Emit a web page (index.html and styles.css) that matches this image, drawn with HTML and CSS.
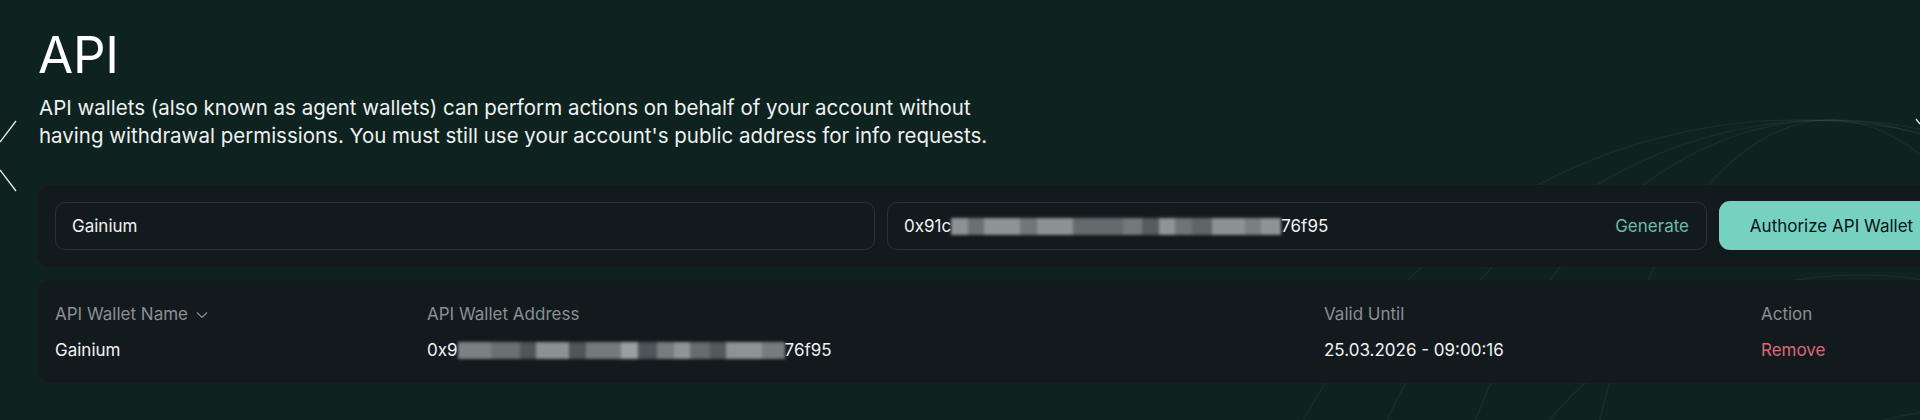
FILE: index.html
```html
<!DOCTYPE html>
<html lang="en">
<head>
<meta charset="utf-8">
<title>API</title>
<link rel="stylesheet" href="styles.css">
</head>
<body>
<div class="page">
  <svg class="decor" width="1920" height="420" viewBox="0 0 1920 420" xmlns="http://www.w3.org/2000/svg">
    <g fill="none" stroke="rgba(255,255,255,0.045)" stroke-width="1.5">
      <circle cx="1800" cy="680" r="560"/>
      <circle cx="1860" cy="680" r="405"/>
      <circle cx="1960" cy="700" r="290"/>
      <ellipse cx="1830" cy="680" rx="500" ry="560"/>
      <ellipse cx="1830" cy="680" rx="400" ry="560"/>
      <ellipse cx="1830" cy="680" rx="260" ry="560"/>
    </g>
    <g stroke="#e9eeed" stroke-width="1.3" fill="none">
      <line x1="16" y1="121" x2="0" y2="142"/>
      <line x1="0" y1="170" x2="16" y2="191"/>
      <line x1="1916" y1="119" x2="1920" y2="124"/>
      <line x1="1920" y1="187" x2="1916" y2="192"/>
    </g>
  </svg>

  <main class="content">
    <h1 class="title">API</h1>
    <p class="intro">API wallets (also known as agent wallets) can perform actions on behalf of your account without having withdrawal permissions. You must still use your account's public address for info requests.</p>

    <section class="card form-card">
      <div class="field">
        <span class="field-text">Gainium</span>
      </div>
      <div class="field field-address">
        <span class="field-text">0x91c<span class="blur blur-input"></span>76f95</span>
        <span class="generate">Generate</span>
      </div>
      <button class="authorize" type="button">Authorize API Wallet</button>
    </section>

    <section class="card table-card">
      <div class="table">
        <div class="th">API Wallet Name
          <svg class="chev" width="12" height="8" viewBox="0 0 12 8"><path d="M1 1.5 L6 6.5 L11 1.5" fill="none" stroke="#8a8f93" stroke-width="1.2"/></svg>
        </div>
        <div class="th">API Wallet Address</div>
        <div class="th">Valid Until</div>
        <div class="th">Action</div>

        <div class="td">Gainium</div>
        <div class="td">0x9<span class="blur blur-table"></span>76f95</div>
        <div class="td">25.03.2026 - 09:00:16</div>
        <div class="td remove">Remove</div>
      </div>
    </section>
  </main>
</div>
</body>
</html>
```

FILE: styles.css
```css
* {
  box-sizing: border-box;
}

html,
body {
  margin: 0;
  padding: 0;
  background: #0e231f;
  overflow: hidden;
}

body {
  font-family: Inter, "Noto Sans", "Liberation Sans", sans-serif;
  color: #f1f3f3;
  width: 1920px;
  height: 420px;
}

.page {
  position: relative;
  width: 1920px;
  height: 420px;
  overflow: hidden;
}

.decor {
  position: absolute;
  left: 0;
  top: 0;
  z-index: 0;
}

.content {
  position: relative;
  z-index: 1;
  padding: 25px 0 0 38px;
  width: 1956px;
}

.title {
  margin: 0;
  font-size: 51px;
  line-height: 60px;
  font-weight: 400;
  color: #ffffff;
  letter-spacing: -0.3px;
}

.intro {
  margin: 9px 0 0 1px;
  max-width: 980px;
  font-size: 20.5px;
  line-height: 28px;
  color: #eef1f1;
}

.card {
  background: #131a1d;
  border-radius: 12px;
  width: 1918px;
}

.form-card {
  margin-top: 35px;
  padding: 17px;
  display: grid;
  grid-template-columns: 820px 820px 220px;
  column-gap: 12px;
}

.field {
  height: 48px;
  border: 1px solid #2a3134;
  border-radius: 10px;
  display: flex;
  align-items: center;
  justify-content: space-between;
  padding: 0 17px 0 16px;
  font-size: 17px;
}

.field-text {
  display: inline-flex;
  align-items: center;
  color: #f1f3f3;
}

.generate {
  color: #66bdad;
}

.blur {
  display: inline-block;
  height: 17px;
  filter: blur(1.6px);
  margin-top: 1px;
}

.blur-input {
  width: 330px;
  background: linear-gradient(to right,
    #8c9193 0%, #8c9193 5%,
    #6b7073 5%, #6b7073 10%,
    #8e9395 10%, #8e9395 21%,
    #70767a 21%, #70767a 26%,
    #8d9294 26%, #8d9294 37%,
    #646a6d 37%, #646a6d 52%,
    #74797c 52%, #74797c 58%,
    #555b5e 58%, #555b5e 63%,
    #8f9496 63%, #8f9496 68%,
    #6f7477 68%, #6f7477 73%,
    #5f6568 73%, #5f6568 79%,
    #8d9294 79%, #8d9294 89%,
    #7a7f82 89%, #7a7f82 94%,
    #8e9395 94%, #8e9395 100%);
}

.blur-table {
  width: 327px;
  background: linear-gradient(to right,
    #7c8184 0%, #7c8184 10%,
    #6a6f72 10%, #6a6f72 19%,
    #4f5558 19%, #4f5558 24%,
    #8c9193 24%, #8c9193 34%,
    #4f5558 34%, #4f5558 39%,
    #74797c 39%, #74797c 50%,
    #9a9fa1 50%, #9a9fa1 55%,
    #4e5457 55%, #4e5457 61%,
    #777c7f 61%, #777c7f 66%,
    #8f9496 66%, #8f9496 71%,
    #666b6e 71%, #666b6e 77%,
    #53595c 77%, #53595c 82%,
    #8e9395 82%, #8e9395 93%,
    #777c7f 93%, #777c7f 100%);
}

.authorize {
  height: 49px;
  margin-top: -1px;
  border: none;
  border-radius: 11px;
  background: #76d1c0;
  color: #0c1316;
  font-family: Inter, "Noto Sans", "Liberation Sans", sans-serif;
  font-size: 17px;
  font-weight: 400;
  padding: 0 0 0 5px;
  cursor: pointer;
}

.table-card {
  margin-top: 13px;
  padding: 22px 17px 21px;
}

.table {
  display: grid;
  grid-template-columns: 372px 897px 437px 1fr;
  row-gap: 12px;
  font-size: 17px;
  line-height: 24px;
}

.th {
  color: #8a8f93;
  display: flex;
  align-items: center;
}

.chev {
  margin-left: 8px;
  margin-top: 1px;
}

.td {
  color: #f1f3f3;
  display: flex;
  align-items: center;
}

.remove {
  color: #db6878;
}
```
